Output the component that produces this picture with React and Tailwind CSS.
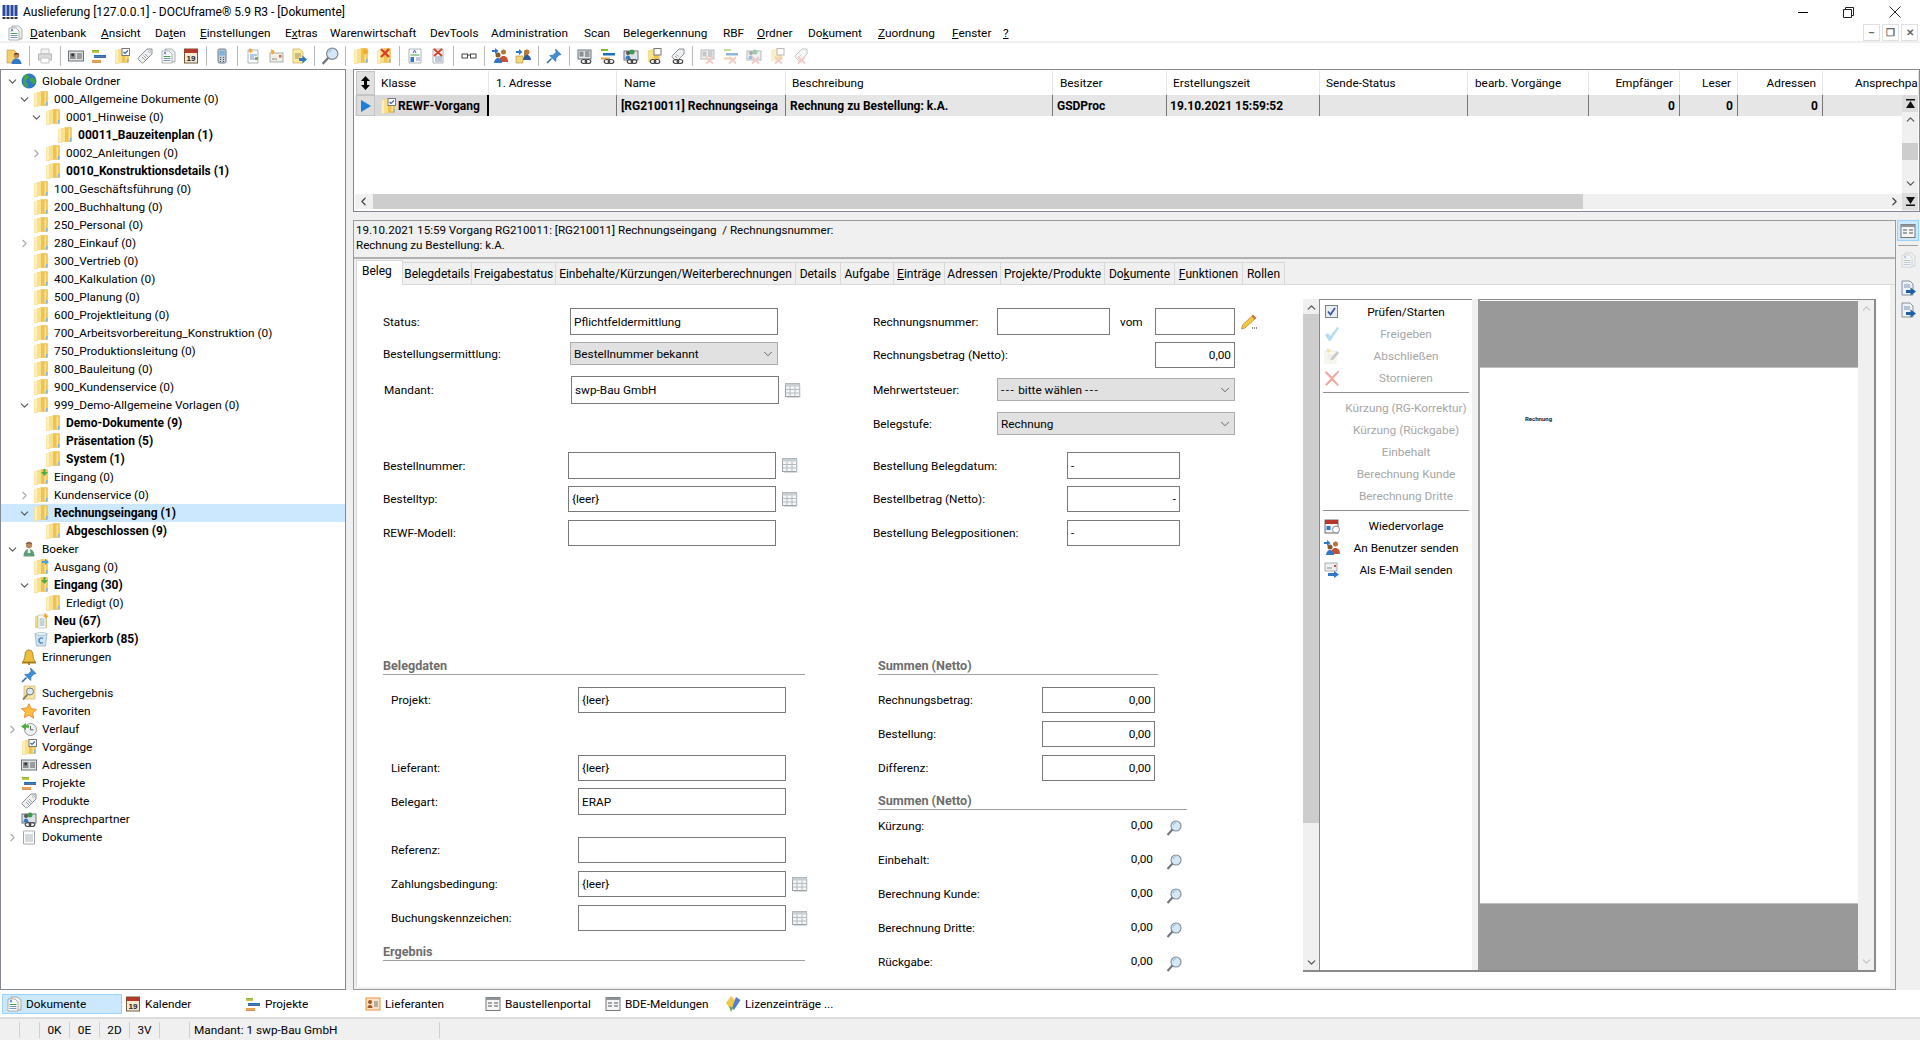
import { ChevronDown, ChevronRight, ChevronUp, ChevronLeft } from "lucide-react";

const Ic = ({ children, w = 16, h = 16, vb = "0 0 16 16" }) => (
  <svg width={w} height={h} viewBox={vb} className="shrink-0 block">{children}</svg>
);

const FolderShape = () => (
  <>
    <path d="M1.500 2.500 8 .5h6.500v14H8l-6.500 1.500z" fill="#e4ae32" />
    <path d="M8 .5h6.500v14H8z" fill="#f0c350" />
    <path d="M1.500 2.500 8 .5v14L1.500 16z" fill="#f9e08e" />
    <path d="M4 2v13l-2.500 1V2.500z" fill="#fdf0bd" />
    <path d="M11.500 1.500h1.700v12h-1.700z" fill="#fae397" />
    <path d="M13 11h1.500v3.500H13z" fill="#7fb4dc" />
  </>
);
const Folder = () => <Ic><FolderShape /></Ic>;
const FolderIn = () => <Ic><FolderShape /><path d="M12.500 0v3H15l-3.500 4L8 3h2.500V0z" fill="#4cae3c" /></Ic>;
const FolderOut = () => <Ic><FolderShape /><path d="M9 2h3V0l4 3-4 3V4H9z" fill="#4a9fdc" /></Ic>;
const FolderCheck = () => <Ic><FolderShape /><rect x="8" y="0.500" width="7.500" height="7" fill="#fff" stroke="#777" /><path d="m9.500 4 1.500 1.500 3-3" stroke="#3a62b0" strokeWidth="1.200" fill="none" /></Ic>;
const FolderStar = () => <Ic><FolderShape /><path d="m12 0 .8 2.200L15 1.400l-.9 2.200L16 5l-2.400.2L12 7l-.8-2-2.200-.2 2-1.400-.6-2.200z" fill="#f5a623" /></Ic>;
const FolderX = () => <Ic><FolderShape /><path d="m5 1 8 8M13 1 5 9" stroke="#d8402c" strokeWidth="2.400" /></Ic>;
const FolderUser = () => (
  <Ic>
    <path d="M1 2h7l2 2v11H1z" fill="#f2cf6a" stroke="#b8923a" strokeWidth=".6" />
    <circle cx="10.500" cy="7.500" r="2.800" fill="#c08a58" />
    <path d="M8 7c0-3 5-3 5 0-2-1-3-1-5 0z" fill="#5a3d28" />
    <path d="M5.500 16c0-3 2.200-5.500 5-5.500s5 2.500 5 5.500z" fill="#2f78c7" />
  </Ic>
);
const NewFolder = () => (
  <Ic>
    <path d="M2 3h12v12H2z" fill="#f6d676" />
    <path d="M5 2h8v13H5z" fill="#fff" stroke="#9aa" strokeWidth=".6" />
    <path d="M6.500 6h5M6.500 8h5M6.500 10h5M6.500 12h5" stroke="#8aa" />
    <path d="m12.500 0 .7 1.800 1.800-.6-.8 1.800 1.600 1.100-2 .2-1.300 1.500-.7-1.800L10 3.500l1.500-1.200-.3-1.800z" fill="#f5a623" />
  </Ic>
);
const Bin = () => (
  <Ic>
    <path d="M2 2.500h12L12.500 15h-9z" fill="#cfe4ee" stroke="#8aa9b8" strokeWidth=".7" />
    <ellipse cx="8" cy="3" rx="6" ry="1.400" fill="#eef6fa" stroke="#8aa9b8" strokeWidth=".6" />
    <path d="M10 7.500a2.500 2.500 0 1 0 0 4" stroke="#4b8bc4" strokeWidth="1.400" fill="none" />
  </Ic>
);
const Globe = () => (
  <Ic>
    <circle cx="8" cy="8" r="7.500" fill="#2f78c9" />
    <path d="M4 2c2-1 4 0 4 2S5 6 5 8s2 2 2 4-1 3-2 2.500C2 13 1 6 4 2zM10 5c2-1 4 1 4.500 3S13 12 11 10s-3-4-1-5z" fill="#3ea848" />
  </Ic>
);
const Person = () => (
  <Ic>
    <circle cx="8" cy="4" r="3.200" fill="#b88a5e" />
    <path d="M5 3c0-2 6-2 6 0-2-1-4-1-6 0z" fill="#5a3d28" />
    <path d="M2.500 15.500c0-5 2.500-7.500 5.500-7.500s5.500 2.500 5.500 7.500z" fill="#5f9d78" />
    <path d="M7 8h2l.5 4H6.500z" fill="#e8f0e8" />
  </Ic>
);
const Bell = () => (
  <Ic>
    <path d="M8 1c3 0 4 2.500 4 5 0 3 1 5 2.500 7h-13C3 11 4 9 4 6c0-2.500 1-5 4-5z" fill="#eebf3c" stroke="#8f6a12" strokeWidth=".7" />
    <path d="M1 13h14v1.500H1z" fill="#a67c16" />
    <circle cx="8" cy="15" r="1" fill="#8f6a12" />
  </Ic>
);
const Pin = () => (
  <Ic>
    <path d="m9.500 1 5.500 5.500-2 .6-3 3-.3 3.400-6-6 3.400-.3 3-3z" fill="#3f8fd6" stroke="#1e5d9c" strokeWidth=".6" />
    <path d="M5.500 10.500 1 15" stroke="#2f6ea8" strokeWidth="1.600" />
  </Ic>
);
const SearchFolder = () => (
  <Ic>
    <path d="M3 1h11v13H3z" fill="#f6e4a8" stroke="#c8a850" strokeWidth=".6" />
    <circle cx="9" cy="6.500" r="3.500" fill="#dbe9f2" stroke="#777" />
    <path d="M6.500 9.500 2 14.500" stroke="#777" strokeWidth="1.800" />
  </Ic>
);
const Star = () => (
  <Ic><path d="m8 .8 2.300 4.900 5.200.7-3.800 3.700.9 5.300L8 12.100l-4.600 2.500.9-5.300L.5 5.600l5.200-.7z" fill="#fbc03e" stroke="#e8792b" strokeWidth=".8" /></Ic>
);
const Clock = () => (
  <Ic>
    <circle cx="9.500" cy="8.500" r="6" fill="#eef1f2" stroke="#999" />
    <path d="M9.500 5v3.800h3" stroke="#666" fill="none" />
    <path d="M0 5.500 5 2v2.300h3v2.500H5V9z" fill="#4cae3c" />
  </Ic>
);
const Address = () => (
  <Ic>
    <rect x=".5" y="3" width="15" height="10" fill="#dfe3e6" stroke="#6d7377" />
    <rect x="2" y="5" width="5.500" height="6" fill="#8b8f92" />
    <circle cx="4.700" cy="7" r="1.400" fill="#333" />
    <path d="M9 6h5M9 8h5M9 10h5" stroke="#555" />
  </Ic>
);
const Bars = () => (
  <Ic>
    <path d="M1 2h7v1.800H1z" fill="#8dba2d" />
    <path d="M1 3.800h7v1H1z" fill="#c9b51e" />
    <path d="M3 7h12v1.800H3z" fill="#1f6fb7" />
    <path d="M3 8.800h12v1H3z" fill="#2b3f7a" />
    <path d="M1 12h9v1.800H1z" fill="#ef9f3e" />
    <path d="M1 13.800h9v1H1z" fill="#c8782e" />
  </Ic>
);
const Tag = () => (
  <Ic>
    <path d="M10 1h5v5l-8.500 8.500a1.500 1.500 0 0 1-2 0L1.500 11.500a1.500 1.500 0 0 1 0-2z" fill="#eef0f1" stroke="#8b9094" />
    <circle cx="12.500" cy="3.500" r="1" fill="#fff" stroke="#8b9094" strokeWidth=".6" />
    <path d="m5 9 3 3M6.500 7.500l3 3M8 6l3 3" stroke="#9aa0a4" />
  </Ic>
);
const Doc = () => (
  <Ic>
    <path d="M5 1h6.500L15 4v10H5z" fill="#eef1f4" stroke="#8a8f94" strokeWidth=".7" />
    <path d="M2 3h7l3 3v9H2z" fill="#fff" stroke="#8a8f94" strokeWidth=".7" />
    <path d="M4 6.500 5 4l1 2.500" stroke="#3a62c0" fill="none" strokeWidth=".8" />
    <path d="M3.500 8.500h7" stroke="#45a04a" />
    <path d="M3.500 10.500h7M3.500 12.500h7" stroke="#7d93b8" />
  </Ic>
);
const Calendar = () => (
  <Ic>
    <rect x="1.500" y="1" width="13" height="14" fill="#f4ead4" stroke="#6e5a3c" />
    <path d="M1.500 1h13v4h-13z" fill="#b5382c" />
    <text x="8" y="13" fontSize="8" fontWeight="700" textAnchor="middle" fill="#222" fontFamily="Liberation Sans, sans-serif">19</text>
  </Ic>
);
const Phone = () => (
  <Ic>
    <rect x="4" y="1" width="8" height="14" rx="1.500" fill="#c5ced6" stroke="#6f7a85" />
    <rect x="5.300" y="2.500" width="5.400" height="5" fill="#7fb2dc" />
    <path d="M6 9.500h1M9 9.500h1M6 11.500h1M9 11.500h1M6 13.500h1M9 13.500h1" stroke="#555" />
  </Ic>
);
const Printer = () => (
  <Ic>
    <path d="M4 1h8v5H4z" fill="#f2f2f2" stroke="#c5c5c5" />
    <path d="M1.500 6h13v6h-13z" fill="#d9dcdf" stroke="#b5b8bb" />
    <path d="M4 10h8v5H4z" fill="#fff" stroke="#c5c5c5" />
  </Ic>
);
const NewDoc = () => (
  <Ic>
    <path d="M3 2h10v13H3z" fill="#fff" stroke="#8a8f94" strokeWidth=".7" />
    <path d="M5 7h7M5 9h4M5 11h7" stroke="#6a93c8" />
    <path d="M10 9h3v3h-3z" fill="#7dad5c" />
    <path d="m5 0 .8 1.600 1.700-.4-.7 1.600 1.200 1.100-1.700.1L5.300 5.400 4.700 3.800 3 3.400l1.300-1L4 .8z" fill="#f5a623" />
  </Ic>
);
const NewMail = () => (
  <Ic>
    <rect x="2" y="5" width="13" height="9" fill="#f2efe4" stroke="#8a8f94" strokeWidth=".7" />
    <path d="M4 11h5" stroke="#888" />
    <path d="M11 7h2.500v2.500H11z" fill="#d8683c" />
    <path d="m4 1 .8 1.600 1.700-.4-.7 1.600 1.200 1.100-1.700.1L4.300 6.400 3.700 4.800 2 4.400l1.300-1L3 1.800z" fill="#f5a623" />
  </Ic>
);
const DocArrow = () => (
  <Ic>
    <path d="M2 1h7l3 3v11H2z" fill="#fdeb9e" stroke="#c8a850" strokeWidth=".7" />
    <path d="M4 6h6M4 8h6M4 10h4" stroke="#a08c50" />
    <path d="M8 10h3.500V7.500L16 11.500l-4.500 4V13H8z" fill="#2e78c7" />
  </Ic>
);
const DocBlue = () => (
  <Ic>
    <path d="M2 1h8l3 3v11H2z" fill="#eef2f6" stroke="#6d7a88" strokeWidth=".8" />
    <path d="M4 5h6M4 7h6" stroke="#7d93b8" />
    <path d="M6 10h4.500V7.500L16 11.500l-5.500 4V13H6z" fill="#1f5fa8" />
  </Ic>
);
const Magnifier = ({ size = 16 }) => (
  <Ic w={size} h={size}>
    <circle cx="10" cy="6" r="5" fill="#d5e8f7" stroke="#7f8a92" strokeWidth="1.100" />
    <path d="M7 4a3.500 3.500 0 0 1 4-1.500C9 3 8 4 7 6z" fill="#8fbde6" />
    <path d="M6.500 9.500 1.500 15" stroke="#6f767c" strokeWidth="2" />
  </Ic>
);
const DocLink = () => (
  <Ic>
    <path d="M2 1h12v14H2z" fill="#fff" stroke="#8a8f94" strokeWidth=".7" />
    <path d="M6 5 7.500 2 9 5" stroke="#3a62c0" fill="none" />
    <path d="M3.500 7h9" stroke="#45a04a" />
    <path d="M3.500 9h3.500v5H3.500z" fill="#2e78c7" />
    <path d="M9 10h4M9 12h4" stroke="#7d93b8" />
  </Ic>
);
const DocX = () => (
  <Ic>
    <path d="M3 1h10v14H3z" fill="#fff" stroke="#8a8f94" strokeWidth=".7" />
    <path d="M5 9h7M5 11h7M5 13h7" stroke="#7d93b8" />
    <path d="m4 1 8 7M12 1 4 8" stroke="#d8402c" strokeWidth="2" />
  </Ic>
);
const Glasses = () => (
  <Ic>
    <rect x="1" y="6" width="5.500" height="4" fill="#fff" stroke="#444" />
    <rect x="9.500" y="6" width="5.500" height="4" fill="#fff" stroke="#444" />
    <path d="M6.500 7h3" stroke="#444" />
  </Ic>
);
const Users = () => (
  <>
    <circle cx="11.500" cy="4" r="2.500" fill="#b5763e" />
    <path d="M7 14c0-4 2-6 4.500-6S16 10 16 14z" fill="#cc4f34" />
    <circle cx="6" cy="7" r="2.500" fill="#8a5a2e" />
    <path d="M2 15c0-3 2-5 4-5s4 2 4 5z" fill="#2f78c7" />
  </>
);
const UserArrow = () => (
  <Ic><Users /><path d="M0 2h3V0l3.500 3L3 6V4H0z" fill="#2e78c7" /></Ic>
);
const UserDoc = () => (
  <Ic>
    <path d="M1 8h7v7H1z" fill="#f4d777" stroke="#a58a3a" strokeWidth=".6" />
    <path d="M9 2.500 13 2v10H9z" fill="#b5763e" />
    <circle cx="12" cy="4" r="2.500" fill="#b5763e" />
    <path d="M8 12c0-3 2-5 4-5s4 2 4 5z" fill="#2d5a9c" />
    <path d="M1 3h3V1l3.500 3L4 7V5H1z" fill="#2e78c7" />
  </Ic>
);
const LinkBadge = () => (
  <>
    <ellipse cx="7" cy="13.500" rx="2.800" ry="2" fill="none" stroke="#444" strokeWidth="1.200" />
    <ellipse cx="11" cy="13.500" rx="2.800" ry="2" fill="none" stroke="#444" strokeWidth="1.200" />
  </>
);
const CrossBadge = () => <path d="m6 9 7 6.500M13 9l-7 6.500" stroke="#e9998d" strokeWidth="2" />;
const Linked = ({ children, cross }) => (
  <span className={cross ? "opacity-50 block" : "block"}>
    <Ic>{children}{cross ? <CrossBadge /> : <LinkBadge />}</Ic>
  </span>
);
const AddrG = () => (
  <>
    <rect x="1" y="2" width="13" height="9" fill="#dfe3e6" stroke="#6d7377" />
    <rect x="2.500" y="3.500" width="4" height="5" fill="#8b8f92" />
    <path d="M8 4h4.500M8 6h4.500M8 8h4.500" stroke="#555" />
  </>
);
const BarsG = () => (
  <>
    <path d="M1 1h7v2H1z" fill="#8dba2d" />
    <path d="M3 5h12v2.500H3z" fill="#1f6fb7" />
    <path d="M1 9.500h9v2H1z" fill="#ef9f3e" />
  </>
);
const PersonG = () => (
  <>
    <rect x="1" y="3" width="14" height="9" fill="#dfe3e6" stroke="#6d7377" />
    <circle cx="9" cy="4" r="2.500" fill="#3d9a50" />
    <circle cx="5" cy="5" r="2" fill="#555" />
    <path d="M2.500 11c0-2 1-3.500 2.500-3.500S7.500 9 7.500 11z" fill="#2f78c7" />
  </>
);
const FolderG = () => (
  <>
    <path d="M2 2.500 8 1h5.500v11H8l-6 1.500z" fill="#f0c350" />
    <path d="M2 2.500 8 1v11l-6 1.500z" fill="#f9e08e" />
    <rect x="8" y=".5" width="7" height="6.500" fill="#fff" stroke="#777" />
  </>
);
const TagG = () => (
  <>
    <path d="M10 1h5v5l-6.500 6.500a1.500 1.500 0 0 1-2 0l-3-3a1.500 1.500 0 0 1 0-2z" fill="#eef0f1" stroke="#8b9094" />
    <path d="m6 8 2 2M7.500 6.500l2 2" stroke="#9aa0a4" />
  </>
);
const Notes = () => (
  <Ic>
    <path d="M2.500 2h11v13h-11z" fill="#fff" stroke="#8a8f94" strokeWidth=".8" />
    <path d="M2.500 1h11v2h-11z" fill="#d5d9dc" />
    <path d="M4 6h8M4 8h8M4 10h8M4 12h8" stroke="#a9b2b8" />
  </Ic>
);
const GridPick = () => (
  <svg width="16" height="15" viewBox="0 0 16 15" className="shrink-0 block">
    <rect x=".5" y=".5" width="14" height="13" fill="#f4f6f7" stroke="#9aa1a6" />
    <path d="M.5 .5h14v3h-14z" fill="#c8ced2" />
    <path d="M.5 6.500h14M.5 10h14M5 3.500v10M10 3.500v10" stroke="#b4bbc0" />
    <path d="M15 2v12.500H2" stroke="#d8dadb" fill="none" />
  </svg>
);
const Pencil = () => (
  <Ic w={18} h={18} vb="0 0 18 18">
    <path d="m13 2 3 3L5 15l-3.500 1L2.500 12z" fill="#f1c643" stroke="#9a7b1c" strokeWidth=".6" />
    <path d="m13 2 3 3-1.500 1.300-3-3z" fill="#d86a4a" />
    <path d="M12 15h1M14 15h1M16 15h1" stroke="#222" strokeWidth="1" />
  </Ic>
);
const Checked = () => (
  <Ic>
    <rect x="1.500" y="1.500" width="12" height="12" fill="#e9edf2" stroke="#7a7f85" />
    <path d="m4 7.500 2.500 3L11 4" stroke="#3653a8" strokeWidth="1.700" fill="none" />
  </Ic>
);
const CheckFaded = () => <Ic><path d="m1 9 3-2 2.500 3L13 1l2 1-8.500 13H5z" fill="#b5dcf4" /></Ic>;
const EditFaded = () => (
  <span className="opacity-50 block">
    <Ic>
      <path d="M1 3h11v12H1z" fill="#fbf5dc" stroke="#cfc9b0" strokeWidth=".6" />
      <path d="M3 7h7M3 9h7M3 11h5" stroke="#ccc" />
      <path d="m13 3 2 2-6 7-2.500.5L7 10z" fill="#999" />
      <path d="m4 0 .8 1.600 1.700-.4-.7 1.600 1.200 1.100-1.700.1-1 1.400-.6-1.600L2 3.400l1.300-1L3 .8z" fill="#f5c04a" />
    </Ic>
  </span>
);
const CrossFaded = () => <Ic><path d="M2 1.500 8 7l6-6 .8.800L9 8.500l5.500 6.500-1 .5L8 10l-5.500 5.500-1-1L7 8.500 1 2.500z" fill="#f0a8a0" stroke="#f0a8a0" strokeWidth=".8" /></Ic>;
const CalLink = () => (
  <Ic>
    <rect x="1" y="2" width="13" height="13" fill="#f4f4f4" stroke="#6e6e6e" />
    <path d="M1 2h13v4H1z" fill="#b5382c" />
    <path d="M2.500 8h4v4h-4z" fill="#2e78c7" />
    <circle cx="12" cy="11.500" r="3.500" fill="#fff" stroke="#8a8f94" />
  </Ic>
);
const MailSend = () => (
  <Ic>
    <rect x="1" y="1" width="12" height="8" fill="#eef0f2" stroke="#8a8f94" strokeWidth=".7" />
    <path d="M3 6h5" stroke="#888" />
    <path d="M10 3h2v2h-2z" fill="#c8483c" />
    <path d="M4 11h6V9l5 3.500L10 16v-2H4z" fill="#2e78c7" />
  </Ic>
);
const WinForm = () => (
  <Ic>
    <rect x="1" y="1.500" width="14" height="13" fill="#f4f5f6" stroke="#777" />
    <path d="M1 1.500h14v2.500H1z" fill="#8f959a" />
    <path d="M3 7h4M3 10h4M9 7h4M9 10h4" stroke="#555" />
  </Ic>
);
const Suppliers = () => (
  <Ic>
    <rect x="1" y="2" width="14" height="12" fill="#fbe3c8" stroke="#e8923c" />
    <circle cx="5" cy="6" r="2" fill="#a5572c" />
    <path d="M2.500 12c0-2 1-3 2.500-3s2.500 1 2.500 3z" fill="#a5572c" />
    <path d="M9 6h4M9 8h4M9 10h4" stroke="#777" />
  </Ic>
);
const License = () => (
  <Ic>
    <path d="m6 0 5 5-5 9-5-7z" fill="#efc94c" />
    <path d="m11 1 4.500 3L9 14l-2-2z" fill="#4f7fd0" />
    <path d="m4 10 4 2-2 4z" fill="#5eaa4a" />
  </Ic>
);
const AppLogo = () => (
  <svg width="16" height="16" viewBox="0 0 16 16" className="shrink-0 block">
    <path d="M.5 1h3v11h-3zM4.500 1h3v11h-3zM8.500 1h3v11h-3zM12.500 1h3v11h-3z" fill="#2b4a9b" />
    <path d="M.5 13h3v2h-3zM4.500 13h3v2h-3zM8.500 13h3v2h-3zM12.500 13h3v2h-3z" fill="#333" />
  </svg>
);

const menu = [
  [<><u>D</u>atenbank</>, "w-[71px]"], [<><u>A</u>nsicht</>, "w-[54px]"], [<>Da<u>t</u>en</>, "w-[45px]"],
  [<><u>E</u>instellungen</>, "w-[85px]"], [<>E<u>x</u>tras</>, "w-[45px]"], ["Warenwirtschaft", "w-[100px]"],
  ["DevTools", "w-[61px]"], ["Administration", "w-[93px]"], ["Scan", "w-[39px]"], ["Belegerkennung", "w-[100px]"],
  ["RBF", "w-[34px]"], [<><u>O</u>rdner</>, "w-[51px]"], [<>Do<u>k</u>ument</>, "w-[70px]"],
  [<><u>Z</u>uordnung</>, "w-[74px]"], [<><u>F</u>enster</>, "w-[51px]"], [<u>?</u>, "w-[10px]"],
];

const tools = [
  <FolderUser />, 0, <Printer />, 0, <Address />, <Bars />, <FolderCheck />, <Tag />, <Doc />, <Calendar />, 0, <Phone />, 0,
  <NewDoc />, <NewMail />, <DocArrow />, 0, <Magnifier size={18} />, 0, <FolderStar />, <FolderX />, 0, <DocLink />, <DocX />, 0,
  <Glasses />, 0, <UserArrow />, <UserDoc />, 0, <Pin />, 0,
  <Linked><AddrG /></Linked>, <Linked><BarsG /></Linked>, <Linked><PersonG /></Linked>, <Linked><FolderG /></Linked>, <Linked><TagG /></Linked>, 0,
  <Linked cross><AddrG /></Linked>, <Linked cross><BarsG /></Linked>, <Linked cross><PersonG /></Linked>, <Linked cross><FolderG /></Linked>, <Linked cross><TagG /></Linked>,
];

const depthPad = ["pl-[5px]", "pl-[17px]", "pl-[29px]", "pl-[41px]"];

const tree = [
  [0, "o", <Globe />, "Globale Ordner"],
  [1, "o", <Folder />, "000_Allgemeine Dokumente (0)"],
  [2, "o", <Folder />, "0001_Hinweise (0)"],
  [3, "", <Folder />, "00011_Bauzeitenplan (1)", "b"],
  [2, "c", <Folder />, "0002_Anleitungen (0)"],
  [2, "", <Folder />, "0010_Konstruktionsdetails (1)", "b"],
  [1, "", <Folder />, "100_Geschäftsführung (0)"],
  [1, "", <Folder />, "200_Buchhaltung (0)"],
  [1, "", <Folder />, "250_Personal (0)"],
  [1, "c", <Folder />, "280_Einkauf (0)"],
  [1, "", <Folder />, "300_Vertrieb (0)"],
  [1, "", <Folder />, "400_Kalkulation (0)"],
  [1, "", <Folder />, "500_Planung (0)"],
  [1, "", <Folder />, "600_Projektleitung (0)"],
  [1, "", <Folder />, "700_Arbeitsvorbereitung_Konstruktion (0)"],
  [1, "", <Folder />, "750_Produktionsleitung (0)"],
  [1, "", <Folder />, "800_Bauleitung (0)"],
  [1, "", <Folder />, "900_Kundenservice (0)"],
  [1, "o", <Folder />, "999_Demo-Allgemeine Vorlagen (0)"],
  [2, "", <Folder />, "Demo-Dokumente (9)", "b"],
  [2, "", <Folder />, "Präsentation (5)", "b"],
  [2, "", <Folder />, "System (1)", "b"],
  [1, "", <FolderIn />, "Eingang (0)"],
  [1, "c", <Folder />, "Kundenservice (0)"],
  [1, "o", <Folder />, "Rechnungseingang (1)", "b", true],
  [2, "", <Folder />, "Abgeschlossen (9)", "b"],
  [0, "o", <Person />, "Boeker"],
  [1, "", <FolderOut />, "Ausgang (0)"],
  [1, "o", <FolderIn />, "Eingang (30)", "b"],
  [2, "", <Folder />, "Erledigt (0)"],
  [1, "", <NewFolder />, "Neu (67)", "b"],
  [1, "", <Bin />, "Papierkorb (85)", "b"],
  [0, "", <Bell />, "Erinnerungen"],
  [0, "", <Pin />, ""],
  [0, "", <SearchFolder />, "Suchergebnis"],
  [0, "", <Star />, "Favoriten"],
  [0, "c", <Clock />, "Verlauf"],
  [0, "", <FolderCheck />, "Vorgänge"],
  [0, "", <Address />, "Adressen"],
  [0, "", <Bars />, "Projekte"],
  [0, "", <Tag />, "Produkte"],
  [0, "", <Linked><PersonG /></Linked>, "Ansprechpartner"],
  [0, "c", <Notes />, "Dokumente"],
];

const listCols = "grid grid-cols-[114px_128px_169px_267px_114px_153px_148px_121px_91px_58px_85px_96px]";
const heads = [
  ["Klasse", "pl-[6px]"], ["1. Adresse", "pl-[7px]"], ["Name", "pl-[7px]"], ["Beschreibung", "pl-[6px]"],
  ["Besitzer", "pl-[7px]"], ["Erstellungszeit", "pl-[6px]"], ["Sende-Status", "pl-[6px]"], ["bearb. Vorgänge", "pl-[7px]"],
  ["Empfänger", "justify-end pr-[6px]"], ["Leser", "justify-end pr-[6px]"], ["Adressen", "justify-end pr-[6px]"], ["Ansprechpartner", "pl-[32px]"],
];

const tabs = [
  ["Belegdetails", "w-[69px]"], ["Freigabestatus", "w-[84px]"], ["Einbehalte/Kürzungen/Weiterberechnungen", "w-[240px]"],
  ["Details", "w-[45px]"], ["Aufgabe", "w-[53px]"], [<><u>E</u>inträge</>, "w-[51px]"], ["Adressen", "w-[56px]"],
  ["Projekte/Produkte", "w-[104px]"], [<>Do<u>k</u>umente</>, "w-[70px]"], [<><u>F</u>unktionen</>, "w-[68px]"], ["Rollen", "w-[42px]"],
];

const Field = ({ className, right, children }) => (
  <div className={`shrink-0 bg-white border border-[#7a7a7a] flex items-center px-[3px] ${right ? "justify-end" : ""} ${className}`}>{children}</div>
);
const Select = ({ className, children }) => (
  <div className={`shrink-0 bg-[#e1e1e1] border border-[#adadad] flex items-center justify-between pl-[3px] pr-[2px] ${className}`}>
    <span>{children}</span>
    <ChevronDown size={14} strokeWidth={1.200} className="text-[#333]" />
  </div>
);
const Heading = ({ className, children }) => (
  <div className={`h-[17px] border-b border-[#a0a0a0] font-bold text-[#6d6d6d] text-[12.600px] leading-[16px] ${className}`}>{children}</div>
);
const Sum = ({ className, label }) => (
  <div className={`flex items-center h-[18px] ${className}`}>
    <div className="w-[226px] shrink-0">{label}</div>
    <div className="w-[49px] text-right shrink-0 -translate-y-[1px]">0,00</div>
    <div className="ml-[13px] translate-y-[2px]"><Magnifier /></div>
  </div>
);

const actions = [
  [<Checked />, "Prüfen/Starten"], [<CheckFaded />, "Freigeben", 1], [<EditFaded />, "Abschließen", 1], [<CrossFaded />, "Stornieren", 1],
  "line",
  [null, "Kürzung (RG-Korrektur)", 1], [null, "Kürzung (Rückgabe)", 1], [null, "Einbehalt", 1], [null, "Berechnung Kunde", 1], [null, "Berechnung Dritte", 1],
  "line",
  [<CalLink />, "Wiedervorlage"], [<UserArrow />, "An Benutzer senden"], [<MailSend />, "Als E-Mail senden"],
];

const bottomTabs = [
  [<Doc />, "Dokumente", "w-[120px] bg-[#cce8ff] border border-[#99d1ff]"],
  [<Calendar />, "Kalender", "w-[120px]"], [<Bars />, "Projekte", "w-[120px] pl-[1px]"], [<Suppliers />, "Lieferanten", "w-[120px]"],
  [<WinForm />, "Baustellenportal", "w-[120px]"], [<WinForm />, "BDE-Meldungen", "w-[120px]"], [<License />, "Lizenzeinträge ...", "w-[130px]"],
];

const Dashes = () => <span className="tracking-[1.500px]">---</span>;

export default function App() {
  return (
    <div className="w-[1920px] h-[1040px] overflow-hidden bg-white flex flex-col text-[11.800px] leading-[16px] text-black font-['Roboto',sans-serif]">
      {/* title */}
      <div className="h-[24px] flex items-center pl-[2px] shrink-0 relative">
        <AppLogo />
        <span className="ml-[5px] text-[12px]">Auslieferung [127.0.0.1] - DOCUframe® 5.9 R3 - [Dokumente]</span>
        <div className="ml-auto flex items-center text-[#111]">
          <div className="w-[10px] h-[1px] bg-black mr-[35px]" />
          <svg width="11" height="11" viewBox="0 0 11 11" className="mr-[35px]"><path d="M.5 2.500h8v8h-8zM2.500 2.500v-2h8v8h-2" fill="none" stroke="#222" /></svg>
          <svg width="12" height="12" viewBox="0 0 12 12" className="mr-[19px]"><path d="m.5 .5 11 11M11.500 .5l-11 11" stroke="#222" /></svg>
        </div>
      </div>
      {/* menu */}
      <div className="h-[17px] flex items-center shrink-0">
        <div className="w-[30px] pl-[7px] shrink-0"><Doc /></div>
        {menu.map(([t, w], i) => <div key={i} className={`${w} shrink-0`}>{t}</div>)}
        <div className="ml-auto flex items-center gap-[2px] pr-[2px]">
          {["–", "❐", "✕"].map((c, i) => (
            <div key={i} className="w-[17px] h-[17px] border border-[#e0e0e0] flex items-center justify-center text-[10px] text-[#666] font-bold">{c}</div>
          ))}
        </div>
      </div>
      <div className="h-[2px] bg-[#f0f0f0] shrink-0" />
      {/* toolbar */}
      <div className="h-[26px] flex items-center pl-[2px] pb-[1px] shrink-0">
        {tools.map((t, i) =>
          t === 0 ? (
            <div key={i} className="w-[8px] h-[20px] flex justify-center shrink-0"><div className="w-[1px] h-full bg-[#b8b8b8]" /></div>
          ) : (
            <div key={i} className="w-[23px] flex justify-center shrink-0">{t}</div>
          )
        )}
      </div>
      {/* main */}
      <div className="flex flex-1 min-h-0 bg-[#f0f0f0]">
        {/* tree */}
        <div className="w-[346px] shrink-0 bg-white border border-[#828790] pt-[2px] pb-[1px] overflow-hidden">
          {tree.map(([d, ex, icon, text, bold, sel], i) => (
            <div key={i} className={`h-[18px] flex items-center ${depthPad[d]} ${sel ? "bg-[#cce8ff]" : ""} ${bold ? "font-bold text-[12px]" : ""}`}>
              <div className="w-[13px] flex justify-center shrink-0">
                {ex === "o" && <ChevronDown size={13} strokeWidth={2} className="text-[#555]" />}
                {ex === "c" && <ChevronRight size={13} strokeWidth={2} className="text-[#aaa]" />}
              </div>
              <div className="ml-[2px] mr-[5px] shrink-0">{icon}</div>
              <span className="whitespace-nowrap">{text}</span>
            </div>
          ))}
        </div>
        {/* right side */}
        <div className="ml-[7px] flex-1 min-w-0 flex flex-col">
          {/* list */}
          <div className="h-[143px] shrink-0 bg-white border border-[#828790] pt-[1px] pl-[1px] flex flex-col overflow-hidden">
            <div className="h-[24px] flex shrink-0">
              <div className="w-[19px] ml-[1px] bg-[#e1e1e1] border border-[#c4c4c4] flex items-center justify-center shrink-0">
                <svg width="9" height="14" viewBox="0 0 9 14"><path d="M4.500 0 9 5H6v4h3l-4.500 5L0 9h3V5H0z" fill="#000" /></svg>
              </div>
              <div className={`${listCols} flex-1 min-w-0`}>
                {heads.map(([h, c]) => (
                  <div key={h} className={`flex items-center border-r border-[#e5e5e5] whitespace-nowrap overflow-hidden ${c}`}>{h}</div>
                ))}
              </div>
            </div>
            <div className="flex flex-1 min-h-0">
              <div className="flex-1 min-w-0 flex flex-col">
                <div className="h-[21px] flex shrink-0 font-bold text-[12px] bg-[#e6e6e6]">
                  <div className="w-[19px] ml-[1px] bg-[#dcdcdc] border border-[#c4c4c4] flex items-center justify-center shrink-0">
                    <svg width="10" height="12" viewBox="0 0 10 12"><path d="M0 0 10 6 0 12z" fill="#1f7fd8" /></svg>
                  </div>
                  <div className={`${listCols} flex-1 min-w-0`}>
                    <div className="flex items-center pl-[5px] bg-[#d9d9d9] border-r-2 border-black whitespace-nowrap"><FolderCheck /><span className="ml-[2px]">REWF-Vorgang</span></div>
                    <div className="border-r border-[#777]" />
                    <div className="flex items-center pl-[4px] border-r border-[#777] whitespace-nowrap overflow-hidden">[RG210011] Rechnungseinga</div>
                    <div className="flex items-center pl-[4px] border-r border-[#777]">Rechnung zu Bestellung: k.A.</div>
                    <div className="flex items-center pl-[4px] border-r border-[#777]">GSDProc</div>
                    <div className="flex items-center pl-[3px] border-r border-[#777]">19.10.2021 15:59:52</div>
                    <div className="border-r border-[#777]" />
                    <div className="border-r border-[#777]" />
                    <div className="flex items-center justify-end pr-[4px] border-r border-[#777]">0</div>
                    <div className="flex items-center justify-end pr-[4px] border-r border-[#777]">0</div>
                    <div className="flex items-center justify-end pr-[4px] border-r border-[#777]">0</div>
                    <div />
                  </div>
                </div>
                <div className="flex-1" />
                <div className="h-[15px] mb-[2px] bg-[#f0f0f0] flex items-center shrink-0 relative">
                  <ChevronLeft size={13} strokeWidth={2.200} className="text-[#444] ml-[2px] shrink-0" />
                  <div className="ml-[3px] w-[1210px] h-full bg-[#cdcdcd]" />
                  <ChevronRight size={13} strokeWidth={2.200} className="text-[#444] ml-auto mr-[1px] shrink-0" />
                </div>
              </div>
              <div className="w-[16px] mr-[1px] bg-[#f0f0f0] flex flex-col items-center shrink-0">
                <div className="w-full h-[17px] bg-[#dcdcdc] flex items-center justify-center shrink-0">
                  <svg width="9" height="9" viewBox="0 0 9 9"><path d="M0 0h9v1.500H0zM4.500 2 9 9H0z" fill="#111" /></svg>
                </div>
                <ChevronUp size={13} strokeWidth={2.200} className="text-[#555] mt-[1px] shrink-0" />
                <div className="w-full h-[17px] bg-[#cdcdcd] mt-[17px] shrink-0" />
                <ChevronDown size={13} strokeWidth={2.200} className="text-[#555] mt-[17px] shrink-0" />
                <div className="w-full h-[17px] bg-[#dcdcdc] flex items-center justify-center mt-auto mb-[1px] shrink-0">
                  <svg width="9" height="9" viewBox="0 0 9 9"><path d="M0 7.500h9V9H0zM4.500 7 9 0H0z" fill="#111" /></svg>
                </div>
              </div>
            </div>
          </div>
          {/* detail + strip */}
          <div className="flex flex-1 min-h-0 mt-[8px]">
            <div className="w-[1543px] shrink-0 border border-[#9a9a9a] flex flex-col bg-[#f0f0f0]">
              <div className="h-[38px] px-[2px] pt-[2px] border-b-2 border-[#b0b0b0] leading-[15px] text-[11.600px] whitespace-pre shrink-0">
                <div>19.10.2021 15:59 Vorgang RG210011: [RG210011] Rechnungseingang  / Rechnungsnummer:</div>
                <div>Rechnung zu Bestellung: k.A.</div>
              </div>
              <div className="h-[26px] pl-[2px] flex items-end shrink-0 pt-[1px] text-[12px]">
                <div className="w-[47px] h-[25px] bg-white border border-b-0 border-[#d9d9d9] pl-[5px] pt-[2px] shrink-0">Beleg</div>
                <div className="flex h-[23px] flex-1 border-b border-[#d9d9d9]">
                  {tabs.map(([t, w], i) => (
                    <div key={i} className={`${w} shrink-0 h-full border-r border-t border-[#d9d9d9] flex items-center justify-center whitespace-nowrap`}>{t}</div>
                  ))}
                </div>
              </div>
              {/* tab page */}
              <div className="flex-1 min-h-0 ml-[2px] mr-[5px] mb-[2px] bg-white border-l border-[#d9d9d9] flex">
                {/* form */}
                <div className="w-[946px] shrink-0 flex pl-[26px]">
                  <div className="w-[490px] shrink-0">
                    <div className="mt-[23px] flex items-center"><div className="w-[187px] shrink-0">Status:</div><Field className="w-[208px] h-[27px]">Pflichtfeldermittlung</Field></div>
                    <div className="mt-[7px] flex items-center"><div className="w-[187px] shrink-0">Bestellungsermittlung:</div><Select className="w-[208px] h-[23px]">Bestellnummer bekannt</Select></div>
                    <div className="mt-[11px] flex items-center"><div className="w-[188px] shrink-0 pl-[1px]">Mandant:</div><Field className="w-[208px] h-[28px]">swp-Bau GmbH</Field><div className="ml-[6px]"><GridPick /></div></div>
                    <div className="mt-[48px] flex items-center"><div className="w-[185px] shrink-0">Bestellnummer:</div><Field className="w-[208px] h-[27px]" /><div className="ml-[6px]"><GridPick /></div></div>
                    <div className="mt-[7px] flex items-center"><div className="w-[185px] shrink-0">Bestelltyp:</div><Field className="w-[208px] h-[26px]">{"{leer}"}</Field><div className="ml-[6px]"><GridPick /></div></div>
                    <div className="mt-[8px] flex items-center"><div className="w-[185px] shrink-0">REWF-Modell:</div><Field className="w-[208px] h-[26px]" /></div>

                    <Heading className="mt-[112px] w-[422px]">Belegdaten</Heading>
                    <div className="mt-[12px] pl-[8px] flex items-center"><div className="w-[187px] shrink-0">Projekt:</div><Field className="w-[208px] h-[26px]">{"{leer}"}</Field></div>
                    <div className="mt-[42px] pl-[8px] flex items-center"><div className="w-[187px] shrink-0">Lieferant:</div><Field className="w-[208px] h-[26px]">{"{leer}"}</Field></div>
                    <div className="mt-[7px] pl-[8px] flex items-center"><div className="w-[187px] shrink-0">Belegart:</div><Field className="w-[208px] h-[27px]">ERAP</Field></div>
                    <div className="mt-[22px] pl-[8px] flex items-center"><div className="w-[187px] shrink-0">Referenz:</div><Field className="w-[208px] h-[26px]" /></div>
                    <div className="mt-[8px] pl-[8px] flex items-center"><div className="w-[187px] shrink-0">Zahlungsbedingung:</div><Field className="w-[208px] h-[26px]">{"{leer}"}</Field><div className="ml-[6px]"><GridPick /></div></div>
                    <div className="mt-[8px] pl-[8px] flex items-center"><div className="w-[187px] shrink-0">Buchungskennzeichen:</div><Field className="w-[208px] h-[26px]" /><div className="ml-[6px]"><GridPick /></div></div>
                    <Heading className="mt-[13px] w-[422px]">Ergebnis</Heading>
                  </div>
                  <div className="flex-1 min-w-0">
                    <div className="mt-[23px] flex items-center"><div className="w-[124px] shrink-0">Rechnungsnummer:</div><Field className="w-[113px] h-[27px]" /><div className="w-[45px] pl-[10px] shrink-0">vom</div><Field className="w-[80px] h-[27px]" /><div className="ml-[5px]"><Pencil /></div></div>
                    <div className="mt-[7px] flex items-center"><div className="w-[282px] shrink-0">Rechnungsbetrag (Netto):</div><Field right className="w-[80px] h-[26px]">0,00</Field></div>
                    <div className="mt-[10px] flex items-center"><div className="w-[124px] shrink-0">Mehrwertsteuer:</div><Select className="w-[238px] h-[23px]"><Dashes /> bitte wählen <Dashes /></Select></div>
                    <div className="mt-[11px] flex items-center"><div className="w-[124px] shrink-0">Belegstufe:</div><Select className="w-[238px] h-[23px]">Rechnung</Select></div>
                    <div className="mt-[17px] flex items-center"><div className="w-[194px] shrink-0">Bestellung Belegdatum:</div><Field className="w-[113px] h-[27px]">-</Field></div>
                    <div className="mt-[7px] flex items-center"><div className="w-[194px] shrink-0">Bestellbetrag (Netto):</div><Field right className="w-[113px] h-[26px]">-</Field></div>
                    <div className="mt-[8px] flex items-center"><div className="w-[194px] shrink-0">Bestellung Belegpositionen:</div><Field className="w-[113px] h-[26px]">-</Field></div>

                    <div className="pl-[5px]">
                      <Heading className="mt-[112px] w-[280px]">Summen (Netto)</Heading>
                      <div className="mt-[12px] flex items-center"><div className="w-[164px] shrink-0">Rechnungsbetrag:</div><Field right className="w-[113px] h-[26px]">0,00</Field></div>
                      <div className="mt-[8px] flex items-center"><div className="w-[164px] shrink-0">Bestellung:</div><Field right className="w-[113px] h-[26px]">0,00</Field></div>
                      <div className="mt-[8px] flex items-center"><div className="w-[164px] shrink-0">Differenz:</div><Field right className="w-[113px] h-[26px]">0,00</Field></div>
                      <Heading className="mt-[12px] w-[309px]">Summen (Netto)</Heading>
                      <Sum className="mt-[7px]" label="Kürzung:" />
                      <Sum className="mt-[16px]" label="Einbehalt:" />
                      <Sum className="mt-[16px]" label="Berechnung Kunde:" />
                      <Sum className="mt-[16px]" label="Berechnung Dritte:" />
                      <Sum className="mt-[16px]" label="Rückgabe:" />
                    </div>
                  </div>
                </div>
                {/* inner panel */}
                <div className="mt-[14px] h-[673px] flex border-b-2 border-[#8a8a8a] shrink-0">
                  <div className="w-[16px] bg-[#f0f0f0] flex flex-col items-center shrink-0">
                    <ChevronUp size={13} strokeWidth={2.200} className="text-[#555] mt-[2px] shrink-0" />
                    <div className="w-full h-[509px] bg-[#cdcdcd] shrink-0" />
                    <ChevronDown size={13} strokeWidth={2.200} className="text-[#555] mt-auto mb-[1px] shrink-0" />
                  </div>
                  <div className="w-[153px] shrink-0 border-l border-t border-[#8a8a8a] pt-[1px] flex flex-col">
                    {actions.map((a, i) =>
                      a === "line" ? (
                        <div key={i} className="h-[8px] mx-[3px] flex flex-col justify-center shrink-0"><div className="h-[1px] bg-[#909090] mb-[2px]" /></div>
                      ) : (
                        <div key={i} className={`h-[22px] flex items-center pl-[4px] shrink-0 ${a[2] ? "text-[#a6a6a6]" : ""}`}>
                          <div className="w-[16px] h-[16px] shrink-0">{a[0]}</div>
                          <div className="flex-1 text-center whitespace-nowrap">{a[1]}</div>
                        </div>
                      )
                    )}
                  </div>
                  <div className="w-[8px] bg-[#f0f0f0] border-r-2 border-[#9a9a9a] shrink-0" />
                  <div className="w-[396px] shrink-0 border-t border-[#8a8a8a] flex">
                    <div className="w-[378px] flex flex-col shrink-0 border-t border-[#fff]">
                      <div className="h-[67px] bg-[#999999] border-b border-[#c0c0c0]" />
                      <div className="flex-1 bg-white pl-[45px] pt-[47px] text-[6px] leading-[8px] font-bold text-[#223]">Rechnung</div>
                      <div className="h-[67px] bg-[#999999] border-t border-[#c0c0c0]" />
                    </div>
                    <div className="flex-1 bg-[#f0f0f0] border-r-2 border-[#8a8a8a] flex flex-col items-center">
                      <ChevronUp size={13} strokeWidth={2.200} className="text-[#c4c4c4] mt-[2px]" />
                      <ChevronDown size={13} strokeWidth={2.200} className="text-[#c4c4c4] mt-auto mb-[2px]" />
                    </div>
                  </div>
                </div>
              </div>
            </div>
            {/* right strip */}
            <div className="flex-1 flex flex-col items-center">
              <div className="w-[22px] h-[21px] bg-[#cce8ff] border border-[#99d1ff] flex items-center justify-center shrink-0"><WinForm /></div>
              <div className="w-[20px] h-[1px] bg-[#a0a0a0] mt-[4px] shrink-0" />
              <div className="mt-[6px] opacity-40"><Doc /></div>
              <div className="mt-[12px]"><DocBlue /></div>
              <div className="mt-[6px]"><DocBlue /></div>
            </div>
          </div>
        </div>
      </div>
      {/* bottom tabs */}
      <div className="h-[27px] shrink-0 flex items-center pl-[2px] pt-[1px]">
        {bottomTabs.map(([icon, t, c]) => (
          <div key={t} className={`h-[20px] flex items-center pl-[3px] shrink-0 ${c}`}>
            {icon}<span className="ml-[4px] whitespace-nowrap">{t}</span>
          </div>
        ))}
      </div>
      {/* status */}
      <div className="h-[23px] shrink-0 bg-[#f0f0f0] border-t-2 border-[#dcdcdc] flex items-center">
        <div className="w-[20px] h-[16px] border-r border-[#d0d0d0] shrink-0" />
        <div className="w-[20px] h-[16px] border-r border-[#d0d0d0] shrink-0" />
        {["0K", "0E", "2D", "3V"].map((s) => (
          <div key={s} className="w-[30px] h-[16px] border-r border-[#d0d0d0] flex items-center justify-center shrink-0">{s}</div>
        ))}
        <div className="w-[30px] h-[16px] border-r border-[#d0d0d0] shrink-0" />
        <div className="w-[250px] h-[16px] border-r border-[#d0d0d0] pl-[4px] flex items-center shrink-0">Mandant: 1 swp-Bau GmbH</div>
      </div>
    </div>
  );
}
